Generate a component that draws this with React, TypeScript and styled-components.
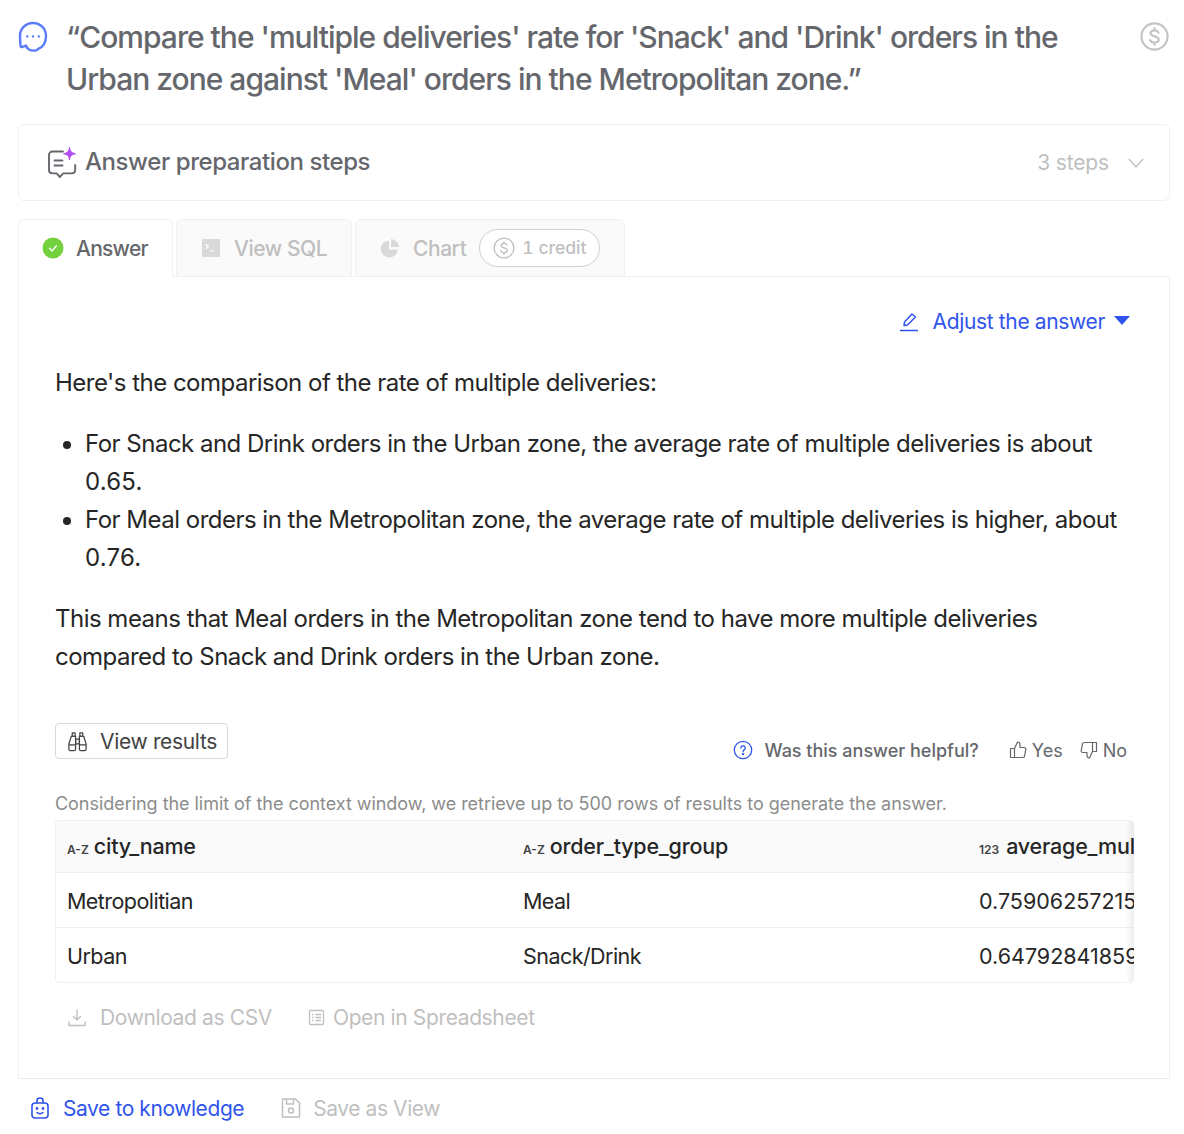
import React from "react";
import styled, { createGlobalStyle } from "styled-components";

const Global = createGlobalStyle`
  html, body { margin: 0; padding: 0; background: #fff; }
  body { font-family: Inter, "Noto Sans", sans-serif; color: #262626; }
  * { box-sizing: border-box; }
`;

const Page = styled.div`
  width: 1184px;
  height: 1134px;
  overflow: hidden;
  padding: 16px 14px 0 18px;
`;
const QuestionRow = styled.div`
  display: flex;
  align-items: flex-start;
  height: 108px;
`;
const QuestionIcon = styled.div`
  width: 48px;
  flex: none;
  padding-top: 5px;
`;
const QuestionText = styled.div`
  flex: 1;
  font-size: 30px;
  line-height: 42px;
  font-weight: 500;
  color: #65676c;
  letter-spacing: -0.99px;
`;
const CoinSlot = styled.div`
  flex: none;
  width: 30px;
  padding-top: 6px;
`;
const StepsCard = styled.div`
  height: 77px;
  border: 1px solid #f0f0f0;
  border-radius: 6px;
  display: flex;
  align-items: center;
  padding: 0 25px 0 28px;
  gap: 7px;
`;
const StepsTitle = styled.div`
  flex: 1;
  font-size: 24px;
  font-weight: 500;
  color: #65676c;
  letter-spacing: -0.42px;
  padding-bottom: 2px;
`;
const StepsCount = styled.div`
  font-size: 21px;
  letter-spacing: -0.15px;
  color: #bfbfbf;
  margin-right: 12px;
`;
const TabBar = styled.div`
  display: flex;
  gap: 3px;
  margin-top: 18px;
  height: 58px;
  margin-bottom: -1px;
  position: relative;
`;
const Tab = styled.div<{ $active?: boolean; $w: number }>`
  width: ${(p) => p.$w}px;
  height: 58px;
  display: flex;
  align-items: center;
  gap: ${(p) => (p.$active ? 12 : 13)}px;
  padding-left: ${(p) => (p.$active ? 23 : 24)}px;
  font-size: 21px;
  font-weight: 500;
  letter-spacing: ${(p) => (p.$active ? "-0.75px" : "-0.45px")};
  border: 1px solid #f0f0f0;
  border-radius: 6px 6px 0 0;
  color: ${(p) => (p.$active ? "#65676c" : "#bfbfbf")};
  background: ${(p) => (p.$active ? "#fff" : "#fafafa")};
  border-bottom-color: ${(p) => (p.$active ? "#fff" : "#f0f0f0")};
  position: relative;
  z-index: ${(p) => (p.$active ? 2 : 1)};
`;
const CreditPill = styled.div`
  height: 38px;
  width: 121px;
  border: 1px solid #d0d0d0;
  border-radius: 19px;
  display: flex;
  align-items: center;
  gap: 7px;
  padding: 0 0 1px 13px;
  font-size: 17.5px;
  font-weight: 500;
  letter-spacing: 0;
  font-variant-numeric: tabular-nums;
  color: #bfbfbf;
  background: #fff;
`;
const Panel = styled.div`
  height: 803px;
  border: 1px solid #f0f0f0;
  border-bottom-color: #ececec;
  padding: 0 35px 0 36px;
`;
const AdjustRow = styled.div`
  display: flex;
  justify-content: flex-end;
  align-items: center;
  height: 87px;
  padding: 2px 4px 0 0;
  gap: 14px;
  color: #2f54eb;
  font-size: 21px;
  letter-spacing: -0.35px;
`;
const Caret = styled.span`
  width: 0;
  height: 0;
  border-left: 8px solid transparent;
  border-right: 8px solid transparent;
  border-top: 9px solid #2f54eb;
  margin-left: -5px;
  margin-top: -2px;
`;
const Para = styled.p`
  margin: 0;
  font-size: 24px;
  line-height: 38px;
  letter-spacing: -0.51px;
  color: #262626;
`;
const BulletList = styled.ul`
  margin: 23px 0;
  padding-left: 30px;
  font-size: 24px;
  line-height: 38px;
  letter-spacing: -0.51px;
  color: #262626;
`;
const Figure = styled.span`
  letter-spacing: 0.2px;
`;
const ActionRow = styled.div`
  margin-top: 47px;
  display: flex;
  justify-content: space-between;
  align-items: flex-start;
  height: 60px;
`;
const OutlineButton = styled.div`
  height: 36px;
  width: 173px;
  border: 1px solid #d9d9d9;
  border-radius: 4px;
  display: flex;
  align-items: center;
  gap: 12px;
  padding-left: 11px;
  font-size: 21px;
  letter-spacing: -0.33px;
  color: #434343;
`;
const Feedback = styled.div`
  display: flex;
  align-items: center;
  height: 54px;
  padding-right: 7px;
  font-size: 18px;
  color: #65676c;
`;
const HelpText = styled.span`
  font-weight: 500;
  margin: 0 30px 0 12px;
`;
const Vote = styled.span`
  display: inline-flex;
  align-items: center;
  gap: 5px;
  margin-right: 17px;
  &:last-child { margin-right: 0; }
`;
const Note = styled.div`
  font-size: 18px;
  line-height: 22px;
  letter-spacing: -0.04px;
  color: #8c8c8c;
  margin-top: 10px;
  height: 27px;
`;
const TableWrap = styled.div`
  position: relative;
  height: 163px;
  border: 1px solid #f0f0f0;
  border-right: none;
  border-radius: 4px;
  overflow: hidden;
`;
const TableRow = styled.div<{ $head?: boolean; $last?: boolean }>`
  display: grid;
  grid-template-columns: 456px 456px 1fr;
  height: ${(p) => (p.$head ? 52 : 55)}px;
  align-items: center;
  padding: ${(p) => (p.$head ? "0 0 1px 11px" : "1px 0 0 11px")};
  background: ${(p) => (p.$head ? "#fafafa" : "#fff")};
  border-bottom: ${(p) => (p.$last ? "none" : "1px solid #f0f0f0")};
  font-size: 21.5px;
  font-weight: ${(p) => (p.$head ? 500 : 400)};
  letter-spacing: ${(p) => (p.$head ? "-0.2px" : "-0.55px")};
  color: #262626;
  white-space: nowrap;
  overflow: hidden;
`;
const NumCell = styled.span`
  letter-spacing: 0;
`;
const TypeTag = styled.span<{ $after: number }>`
  font-size: 12px;
  font-weight: 600;
  letter-spacing: 0;
  color: #434343;
  margin-right: ${(p) => p.$after}px;
`;
const ScrollShade = styled.div`
  position: absolute;
  right: 0;
  top: 0;
  bottom: 0;
  width: 8px;
  background: linear-gradient(to right, rgba(0,0,0,0), rgba(0,0,0,0.07));
`;
const LinkRow = styled.div`
  display: flex;
  align-items: center;
  gap: 36px;
  margin-top: 22px;
  padding-left: 12px;
  font-size: 21px;
  letter-spacing: -0.37px;
  color: #bfbfbf;
`;
const LinkItem = styled.span<{ $gap?: number; $blue?: boolean }>`
  display: inline-flex;
  align-items: center;
  gap: ${(p) => p.$gap ?? 10}px;
  color: ${(p) => (p.$blue ? "#2f54eb" : "#bfbfbf")};
`;
const Footer = styled.div`
  display: flex;
  align-items: center;
  gap: 37px;
  height: 58px;
  padding-left: 12px;
  font-size: 21px;
  letter-spacing: -0.42px;
`;

const Ic = styled.svg`
  display: block;
  flex: none;
`;

const Coin = ({ size, color, sw = 1.6 }: { size: number; color: string; sw?: number }) => (
  <Ic width={size} height={size} viewBox="0 0 24 24" fill="none" stroke={color} strokeWidth={sw} strokeLinecap="round">
    <circle cx="12" cy="12" r="10.8" />
    <path d="M15.4 8.8c-.5-1.2-1.8-1.9-3.4-1.9-1.9 0-3.3 1-3.3 2.5 0 3.3 6.8 1.7 6.8 5.1 0 1.5-1.5 2.5-3.5 2.5-1.7 0-3.1-.8-3.6-2.1M12 5v2M12 17v2" />
  </Ic>
);

export default function App() {
  return (
    <Page>
      <Global />
      <QuestionRow>
        <QuestionIcon>
          <Ic width="30" height="32" viewBox="0 0 30 32" fill="none">
            <path d="M15 2C7.8 2 2 7.6 2 14.6c0 3.3.2 7 .6 10.6.2 1 1 1 2 .6l3.4-1.2c1 3 4 5 8 5 2 0 3-.4 3.8-1.4C25.4 26 28 21 28 15 28 7.6 22.2 2 15 2Z" stroke="#5b7cfa" strokeWidth="2.4" strokeLinejoin="round" />
            <circle cx="9.2" cy="15.4" r="1.2" fill="#5b7cfa" />
            <circle cx="15" cy="15.4" r="1.2" fill="#5b7cfa" />
            <circle cx="20.8" cy="15.4" r="1.2" fill="#5b7cfa" />
          </Ic>
        </QuestionIcon>
        <QuestionText>
          “Compare the 'multiple deliveries' rate for 'Snack' and 'Drink' orders in the Urban zone against 'Meal' orders in the Metropolitan zone.”
        </QuestionText>
        <CoinSlot>
          <Coin size={29} color="#c4c4c4" sw={1.8} />
        </CoinSlot>
      </QuestionRow>

      <StepsCard>
        <Ic width="31" height="32" viewBox="0 0 31 32" fill="none" stroke="#65676c" strokeWidth="1.9" strokeLinecap="round" strokeLinejoin="round">
          <path d="M16 4.500H5.500A3.500 3.500 0 0 0 2 8v15c0 2 1.400 3.400 3.400 3.400h4.200l3.200 3.600 3.400-3.600h8.200c2.400 0 3.800-1.400 3.800-3.600V18" />
          <path d="M7.500 13.500h8M7.500 18.500h8" />
          <path d="M22.500 0.500c.5 4 2 5.500 6 6.200-4 .7-5.500 2.200-6 6.200-.5-4-2-5.500-6-6.200 4-.7 5.500-2.200 6-6.200Z" fill="#b14cf5" stroke="#b14cf5" strokeWidth="1" />
        </Ic>
        <StepsTitle>Answer preparation steps</StepsTitle>
        <StepsCount>3 steps</StepsCount>
        <Ic width="16" height="10" viewBox="0 0 16 10" fill="none" stroke="#bfbfbf" strokeWidth="1.3">
          <path d="M1 1l7 8 7-8" />
        </Ic>
      </StepsCard>

      <TabBar>
        <Tab $active $w={155}>
          <Ic width="22" height="22" viewBox="0 0 22 22">
            <circle cx="11" cy="11" r="10.500" fill="#73d13d" />
            <path d="M7.300 11l2.700 3 4.700-5.500" fill="none" stroke="#fff" strokeWidth="1.4" />
          </Ic>
          Answer
        </Tab>
        <Tab $w={176}>
          <Ic width="20" height="20" viewBox="0 0 20 20">
            <rect x="1" y="1" width="18" height="18" rx="1" fill="#d9d9d9" />
            <path d="M4.500 6l3 2.500-3 2.500M9 13h4" fill="none" stroke="#fff" strokeWidth="1.200" />
          </Ic>
          View SQL
        </Tab>
        <Tab $w={270}>
          <Ic width="20" height="20" viewBox="0 0 20 20">
            <path d="M9 2.500A8.500 8.500 0 1 0 17.800 11.500H9Z" fill="#d9d9d9" />
            <path d="M11 1a8.500 8.500 0 0 1 8 8h-8Z" fill="#d9d9d9" />
          </Ic>
          Chart
          <CreditPill>
            <Coin size={22} color="#bfbfbf" sw={1.4} />
            1 credit
          </CreditPill>
        </Tab>
      </TabBar>

      <Panel>
        <AdjustRow>
          <Ic width="20" height="20" viewBox="0 0 20 20" fill="none" stroke="#2f54eb" strokeWidth="1.500" strokeLinejoin="round">
            <path d="M5 13.500l.5-3.500 7.500-8 3.500 3-8 8-3.500.5Z" />
            <path d="M1 18.500h18" />
          </Ic>
          Adjust the answer
          <Caret />
        </AdjustRow>
        <Para>Here's the comparison of the rate of multiple deliveries:</Para>
        <BulletList>
          <li>For Snack and Drink orders in the Urban zone, the average rate of multiple deliveries is about <Figure>0.65.</Figure></li>
          <li>For Meal orders in the Metropolitan zone, the average rate of multiple deliveries is higher, about <Figure>0.76.</Figure></li>
        </BulletList>
        <Para>
          This means that Meal orders in the Metropolitan zone tend to have more multiple deliveries compared to Snack and Drink orders in the Urban zone.
        </Para>
        <ActionRow>
          <OutlineButton>
            <Ic width="21" height="21" viewBox="0 0 22 22" fill="none" stroke="#434343" strokeWidth="1.300" strokeLinejoin="round">
              <path d="M5.500 2h3v3.500h-3zM13.500 2h3v3.500h-3zM9 8.500h4v5H9z" />
              <path d="M4.500 5.500h4.500V19a1.500 1.500 0 0 1-1.500 1.500h-4A1.500 1.500 0 0 1 2 19v-5.500ZM17.500 5.500H13V19a1.500 1.500 0 0 0 1.500 1.500h4A1.500 1.500 0 0 0 20 19v-5.500ZM2 14.500h7M13 14.500h7" />
            </Ic>
            View results
          </OutlineButton>
          <Feedback>
            <Ic width="20" height="20" viewBox="0 0 20 20" fill="none" stroke="#2f54eb" strokeWidth="1.300" strokeLinecap="round">
              <circle cx="10" cy="10" r="8.700" />
              <path d="M7.800 8a2.200 2.200 0 1 1 3.400 1.900c-.8.500-1.200 1-1.200 1.900" />
              <circle cx="10" cy="14.200" r=".5" fill="#2f54eb" />
            </Ic>
            <HelpText>Was this answer helpful?</HelpText>
            <Vote>
              <Ic width="18" height="18" viewBox="0 0 18 18" fill="none" stroke="#65676c" strokeWidth="1.200" strokeLinejoin="round">
                <path d="M5.500 7.500 8.500 1c1.500 0 2.500 1 2.500 2.500V6.500h4.300c1 0 1.700.9 1.500 1.800l-1.300 7c-.2.8-.8 1.200-1.500 1.200H5.500ZM5.500 7.500H1.500v9h4" />
              </Ic>
              Yes
            </Vote>
            <Vote>
              <Ic width="18" height="18" viewBox="0 0 18 18" fill="none" stroke="#65676c" strokeWidth="1.200" strokeLinejoin="round">
                <path d="M12.500 10.500 9.500 17c-1.500 0-2.500-1-2.500-2.500V11.500H2.700c-1 0-1.700-.9-1.500-1.800l1.300-7C2.700 1.900 3.300 1.500 4 1.500h8.500ZM12.500 10.500h4v-9h-4" />
              </Ic>
              No
            </Vote>
          </Feedback>
        </ActionRow>
        <Note>Considering the limit of the context window, we retrieve up to 500 rows of results to generate the answer.</Note>
        <TableWrap>
          <TableRow $head>
            <span><TypeTag $after={5}>A-Z</TypeTag>city_name</span>
            <span><TypeTag $after={5}>A-Z</TypeTag>order_type_group</span>
            <span><TypeTag $after={7}>123</TypeTag>average_multiple_deliveries</span>
          </TableRow>
          <TableRow>
            <span>Metropolitian</span>
            <span>Meal</span>
            <NumCell>0.759062572156</NumCell>
          </TableRow>
          <TableRow $last>
            <span>Urban</span>
            <span>Snack/Drink</span>
            <NumCell>0.647928418596</NumCell>
          </TableRow>
          <ScrollShade />
        </TableWrap>
        <LinkRow>
          <LinkItem $gap={13}>
            <Ic width="20" height="20" viewBox="0 0 20 20" fill="none" stroke="#bfbfbf" strokeWidth="1.400" strokeLinecap="round" strokeLinejoin="round">
              <path d="M10 2v10M6.500 8.500 10 12l3.500-3.500M2 14v3.500h16V14" />
            </Ic>
            Download as CSV
          </LinkItem>
          <LinkItem $gap={8}>
            <Ic width="17" height="17" viewBox="0 0 17 17" fill="none" stroke="#bfbfbf" strokeWidth="1.300">
              <rect x="1.500" y="1.500" width="14" height="14" rx="1" />
              <path d="M4 5.500h1.500M7.500 5.500H13M4 8.500h1.500M7.500 8.500H13M4 11.500h1.500M7.500 11.500H13" />
            </Ic>
            Open in Spreadsheet
          </LinkItem>
        </LinkRow>
      </Panel>

      <Footer>
        <LinkItem $blue $gap={13}>
          <Ic width="20" height="24" viewBox="0 0 20 24" fill="none" stroke="#2f54eb" strokeWidth="1.600" strokeLinecap="round" strokeLinejoin="round">
            <rect x="2" y="7" width="16" height="15" rx="3" />
            <path d="M7 7V4.500C7 3 8.300 2 10 2s3 1 3 2.500V7" />
            <path d="M7 16.500c1.500 1.500 4.500 1.500 6 0" />
            <circle cx="7" cy="12.500" r=".6" fill="#2f54eb" />
            <circle cx="13" cy="12.500" r=".6" fill="#2f54eb" />
          </Ic>
          Save to knowledge
        </LinkItem>
        <LinkItem $gap={12}>
          <Ic width="20" height="22" viewBox="0 0 20 22" fill="none" stroke="#bfbfbf" strokeWidth="1.500" strokeLinejoin="round">
            <path d="M1.500 2h13l4 4v14h-17Z" />
            <path d="M5.500 2v5h7V2" />
            <circle cx="10" cy="13.500" r="2.500" />
          </Ic>
          Save as View
        </LinkItem>
      </Footer>
    </Page>
  );
}
